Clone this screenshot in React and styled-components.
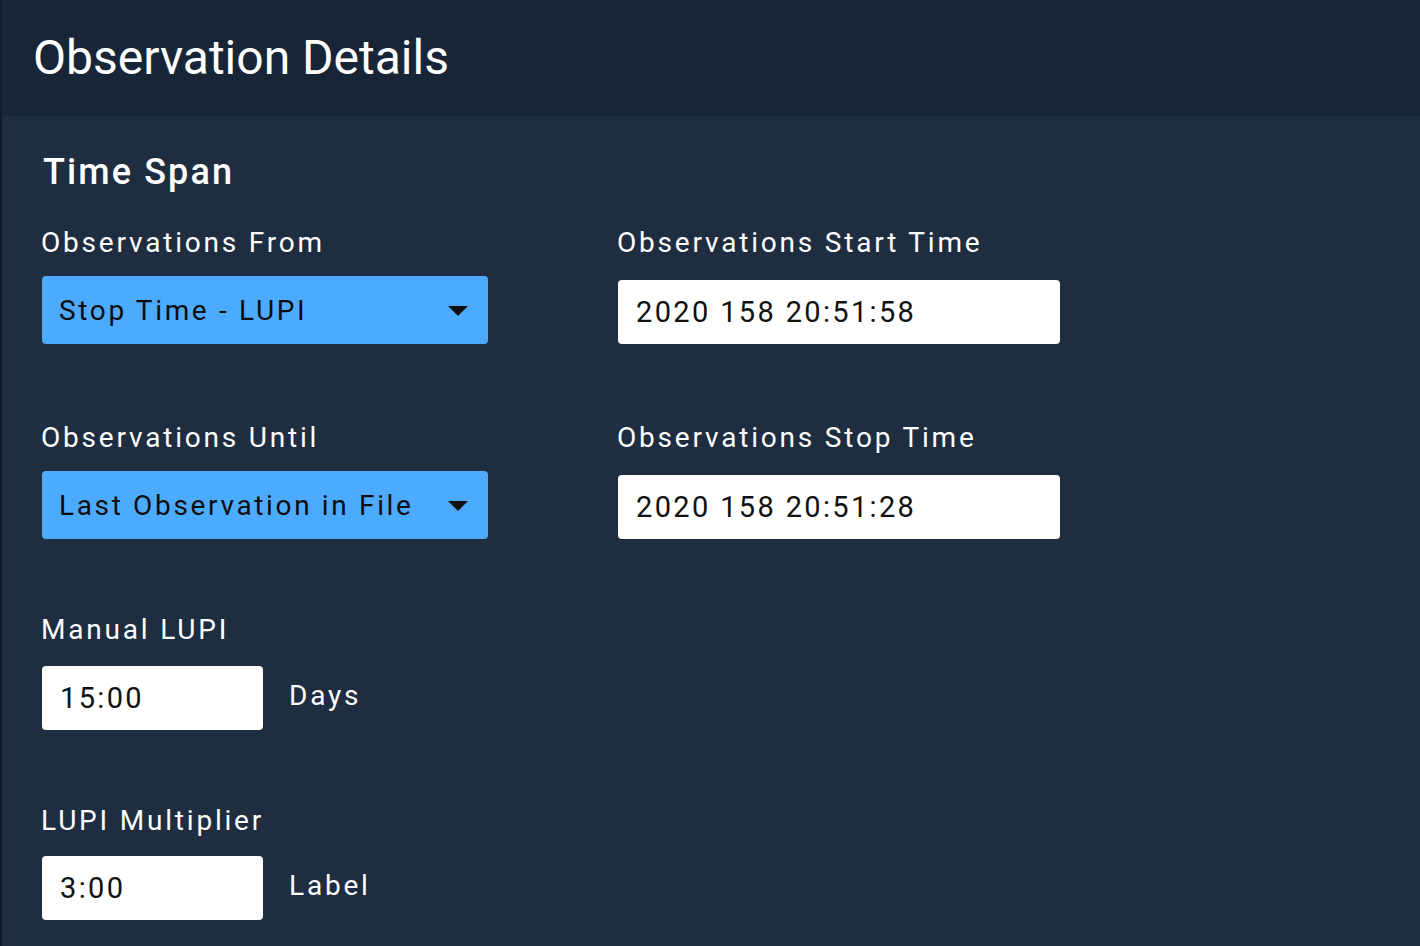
import React from "react";
import styled, { createGlobalStyle } from "styled-components";

const Global = createGlobalStyle`
  html, body { margin: 0; padding: 0; background: #1e2d40; }
  body { font-family: Roboto, "Noto Sans", sans-serif; }
  * { box-sizing: border-box; }
`;

const Page = styled.div`
  min-height: 946px;
  display: flex;
  flex-direction: column;
  border-left: 2px solid #121b28;
  background: #1e2d40;
`;

const Header = styled.header`
  height: 116px;
  display: flex;
  align-items: center;
  padding-left: 31px;
  background: #172536;
`;

const Title = styled.h1`
  margin: 0;
  font-family: Roboto, sans-serif;
  font-weight: 400;
  font-size: 48px;
  color: #ffffff;
  padding-bottom: 2px;
`;

const Body = styled.main`
  padding: 35px 0 0 39px;
  display: flex;
  flex-direction: column;
`;

const SectionTitle = styled.h2`
  margin: 0 0 33px 2px;
  font-family: Roboto, sans-serif;
  font-weight: 500;
  font-size: 36px;
  letter-spacing: 2.1px;
  color: #ffffff;
`;

const Grid = styled.div`
  display: grid;
  grid-template-columns: 576px 442px;
  row-gap: 77px;
  align-items: end;
`;

const Field = styled.div`
  display: flex;
  flex-direction: column;
  gap: ${(p) => p.$gap}px;
  margin-top: ${(p) => p.$top || 0}px;
`;

const Label = styled.label`
  font-family: Roboto, sans-serif;
  font-size: 28px;
  letter-spacing: 2.8px;
  color: #ffffff;
  line-height: 33px;
`;

const Select = styled.div`
  margin-left: 1px;
  width: 446px;
  height: 68px;
  border-radius: 4px;
  background: #4dabff;
  display: flex;
  align-items: center;
  justify-content: space-between;
  padding: 0 20px 0 17px;
  font-family: Roboto, sans-serif;
  font-size: 28px;
  letter-spacing: 2.65px;
  color: #0d0d0d;
`;

const Caret = styled.span`
  width: 0;
  height: 0;
  border-left: 10px solid transparent;
  border-right: 10px solid transparent;
  border-top: 10px solid #111111;
  margin-top: 2px;
`;

const TextBox = styled.div`
  margin-left: 1px;
  width: ${(p) => p.$w}px;
  height: 64px;
  border-radius: 4px;
  background: #ffffff;
  display: flex;
  align-items: center;
  padding-left: ${(p) => p.$pad}px;
  font-family: Roboto, sans-serif;
  font-size: 29px;
  letter-spacing: 2.35px;
  color: #111111;
`;

const InlineRow = styled.div`
  display: flex;
  align-items: center;
  gap: 26px;
`;

const Unit = styled.span`
  font-family: Roboto, sans-serif;
  font-size: 28px;
  letter-spacing: 2.8px;
  color: #ffffff;
  margin-top: -5px;
`;

export default function App() {
  return (
    <>
      <Global />
      <Page>
        <Header>
          <Title>Observation Details</Title>
        </Header>
        <Body>
          <SectionTitle>Time Span</SectionTitle>
          <Grid>
            <Field $gap={17}>
              <Label>Observations From</Label>
              <Select>
                Stop Time - LUPI
                <Caret />
              </Select>
            </Field>
            <Field $gap={21}>
              <Label>Observations Start Time</Label>
              <TextBox $w={442} $pad={18}>2020 158 20:51:58</TextBox>
            </Field>
            <Field $gap={17}>
              <Label>Observations Until</Label>
              <Select>
                Last Observation in File
                <Caret />
              </Select>
            </Field>
            <Field $gap={21}>
              <Label>Observations Stop Time</Label>
              <TextBox $w={442} $pad={18}>2020 158 20:51:28</TextBox>
            </Field>
          </Grid>
          <Field $gap={20} $top={74}>
            <Label>Manual LUPI</Label>
            <InlineRow>
              <TextBox $w={221} $pad={18}>15:00</TextBox>
              <Unit>Days</Unit>
            </InlineRow>
          </Field>
          <Field $gap={19} $top={74}>
            <Label>LUPI Multiplier</Label>
            <InlineRow>
              <TextBox $w={221} $pad={18}>3:00</TextBox>
              <Unit>Label</Unit>
            </InlineRow>
          </Field>
        </Body>
      </Page>
    </>
  );
}
